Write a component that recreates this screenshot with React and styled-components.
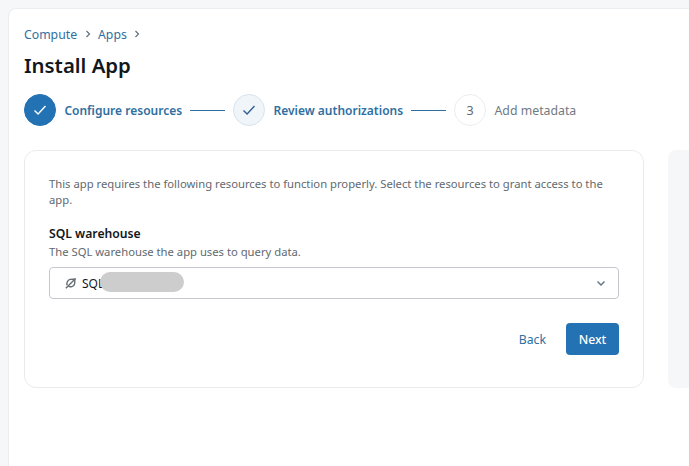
import React from "react";
import styled, { createGlobalStyle } from "styled-components";

const GlobalStyle = createGlobalStyle`
  html, body {
    margin: 0;
    padding: 0;
    height: 100%;
    background-color: #f6f7f9;
    overflow: hidden;
  }
  *, *:before, *:after {
    box-sizing: border-box;
  }
`;

const Page = styled.div`
  height: 466px;
  padding: 8px 0 0 8px;
  font-family: "Noto Sans", "Open Sans", Arial, sans-serif;
  font-size: 12.25px;
  color: #11171c;
`;

const Main = styled.main`
  height: 458px;
  background-color: #fff;
  border-top: 1px solid #ebeef0;
  border-left: 1px solid #ebeef0;
  border-top-left-radius: 8px;
  padding: 15px 0 0 15px;
  overflow: hidden;
`;

const Breadcrumbs = styled.nav`
  display: flex;
  align-items: center;
  gap: 6.5px;
  height: 20px;
  color: #2f6f9f;
`;

const Chevron = styled.svg`
  width: 8px;
  height: 8px;
  fill: none;
  stroke: ${props => props.color || "#5f7281"};
  stroke-width: 1.2;
`;

const Title = styled.h1`
  margin: 7px 0 0;
  font-size: 20.4px;
  line-height: 28px;
  font-weight: 600;
  color: #11171c;
`;

const Stepper = styled.div`
  display: flex;
  align-items: center;
  margin-top: 15px;
  height: 32px;
`;

const StepCircle = styled.div`
  width: 32px;
  height: 32px;
  flex: none;
  border-radius: 50%;
  display: flex;
  align-items: center;
  justify-content: center;
  font-size: 12.5px;
  color: #62696f;
  background-color: ${props =>
    props.kind === "done" ? "#2272b4" : props.kind === "visited" ? "#f0f5fa" : "#fff"};
  border: 1px solid
    ${props =>
      props.kind === "done" ? "#2272b4" : props.kind === "visited" ? "#d8e2ea" : "#ebeef0"};
`;

const CheckIcon = styled.svg`
  width: 16px;
  height: 16px;
  fill: none;
  stroke: ${props => (props.light ? "#fff" : "#2f6091")};
  stroke-width: 1.4;
`;

const StepLabel = styled.span`
  margin-left: 8.4px;
  white-space: nowrap;
  font-size: ${props => (props.muted ? "12.3px" : "12px")};
  font-weight: ${props => (props.muted ? 400 : 600)};
  color: ${props => (props.muted ? "#6f7a82" : "#2f6f9f")};
`;

const StepLine = styled.div`
  width: 35px;
  height: 1px;
  margin: 0 8px;
  flex: none;
  background-color: #2f6f9f;
`;

const Columns = styled.div`
  display: flex;
  gap: 24px;
  margin-top: 24px;
  height: 238px;
`;

const Card = styled.section`
  width: 620px;
  flex: none;
  border: 1px solid #e8ebed;
  border-radius: 12px;
  padding: 25px 24px 24px;
  display: flex;
  flex-direction: column;
`;

const SidePanel = styled.aside`
  flex: 1;
  background-color: #f6f7f9;
  border-radius: 8px 0 0 8px;
`;

const Intro = styled.p`
  margin: 0;
  font-size: 11.25px;
  line-height: 16px;
  color: #62696f;
`;

const FieldLabel = styled.div`
  margin-top: 17px;
  font-size: 12.2px;
  line-height: 18px;
  font-weight: 600;
  color: #11171c;
`;

const FieldHint = styled.div`
  margin-top: 1px;
  font-size: 11.25px;
  line-height: 16px;
  color: #62696f;
`;

const Select = styled.div`
  position: relative;
  margin-top: 7px;
  height: 32px;
  border: 1px solid #c4c8cc;
  border-radius: 4px;
  display: flex;
  align-items: center;
  padding: 0 12px 0 15px;
  font-size: 12px;
`;

const SelectValue = styled.span`
  margin-left: 5px;
  flex: 1;
  color: #11171c;
`;

const Redaction = styled.div`
  position: absolute;
  left: 50px;
  top: 4px;
  width: 84px;
  height: 20px;
  border-radius: 10px;
  background-color: #cdcdcd;
  filter: blur(0.6px);
`;

const Actions = styled.div`
  display: flex;
  justify-content: flex-end;
  align-items: center;
  gap: 20px;
  margin-top: 24px;
`;

const BackButton = styled.button`
  border: none;
  background: none;
  padding: 0;
  font: inherit;
  color: #2f6f9f;
`;

const NextButton = styled.button`
  width: 53px;
  height: 32px;
  border: none;
  border-radius: 4px;
  background-color: #2272b4;
  color: #fff;
  font: inherit;
  font-weight: 500;
`;

const Check = ({ light }) => (
  <CheckIcon light={light} viewBox="0 0 16 16">
    <path d="M2.5 8.5l3.6 3.6 7.4-8" />
  </CheckIcon>
);

const BreadcrumbChevron = () => (
  <Chevron viewBox="0 0 8 8">
    <path d="M2.5 1l3 3-3 3" />
  </Chevron>
);

const App = () => (
  <Page>
    <GlobalStyle />
    <Main>
      <Breadcrumbs>
        <span>Compute</span>
        <BreadcrumbChevron />
        <span>Apps</span>
        <BreadcrumbChevron />
      </Breadcrumbs>
      <Title>Install App</Title>
      <Stepper>
        <StepCircle kind="done">
          <Check light />
        </StepCircle>
        <StepLabel>Configure resources</StepLabel>
        <StepLine />
        <StepCircle kind="visited">
          <Check />
        </StepCircle>
        <StepLabel>Review authorizations</StepLabel>
        <StepLine />
        <StepCircle>3</StepCircle>
        <StepLabel muted>Add metadata</StepLabel>
      </Stepper>
      <Columns>
        <Card>
          <Intro>
            This app requires the following resources to function properly. Select the
            resources to grant access to the app.
          </Intro>
          <FieldLabel>SQL warehouse</FieldLabel>
          <FieldHint>The SQL warehouse the app uses to query data.</FieldHint>
          <Select>
            <svg width="12" height="12" viewBox="0 0 12 12" fill="none" stroke="#666d73" strokeWidth="1.4">
              <path d="M2.2 8.2C1.2 6 2.6 3 5 2.4c1.2-.3 2.4-.2 4.8-.2 0 2.2.2 3.800-.4 5.200C8.600 9.500 5.500 10.400 3.300 9.400" />
              <path d="M0.800 11.200L10.600 1.400" />
            </svg>
            <SelectValue>SQL</SelectValue>
            <Redaction />
            <svg width="10" height="10" viewBox="0 0 10 10" fill="none" stroke="#5f7281" strokeWidth="1.4">
              <path d="M1.5 3.5L5 7l3.5-3.5" />
            </svg>
          </Select>
          <Actions>
            <BackButton>Back</BackButton>
            <NextButton>Next</NextButton>
          </Actions>
        </Card>
        <SidePanel />
      </Columns>
    </Main>
  </Page>
);

export default App;
